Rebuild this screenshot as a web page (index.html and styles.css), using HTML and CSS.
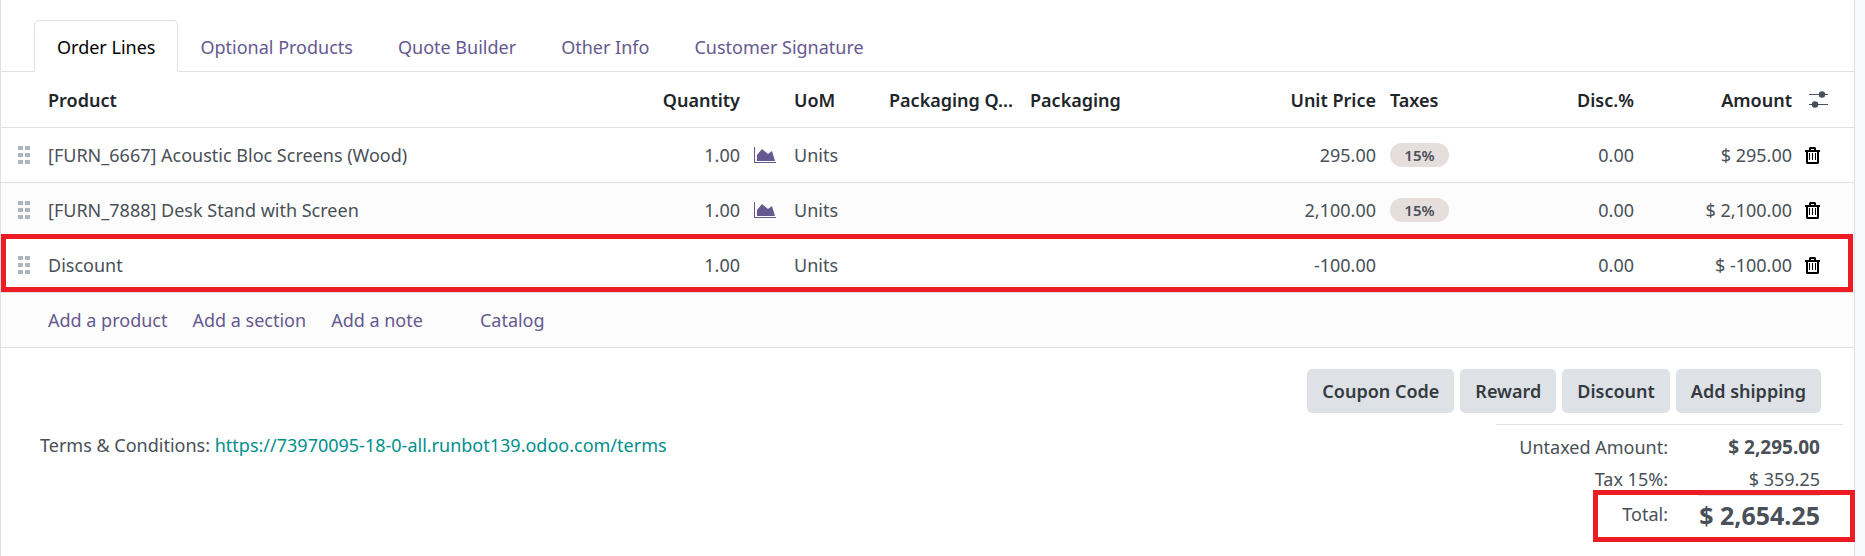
FILE: index.html
```html
<!DOCTYPE html>
<html lang="en">
<head>
    <meta charset="UTF-8">
    <meta name="viewport" content="width=device-width, initial-scale=1.0">
    <title>Order Lines</title>
    <link rel="stylesheet" href="styles.css">
</head>
<body>
    <!-- Shared icons -->
    <svg class="sprite" aria-hidden="true">
        <symbol id="icon-handle" viewBox="0 0 12 18">
            <path d="M0 0h5v4H0zM7 0h5v4H7zM0 7h5v4H0zM7 7h5v4H7zM0 14h5v4H0zM7 14h5v4H7z"/>
        </symbol>
        <symbol id="icon-chart" viewBox="0 0 22 17">
            <path d="M0 0h1v15h21v1H0z"/>
            <path d="M3 14V8l5-6 6 5 4-3 3 10z"/>
        </symbol>
        <symbol id="icon-trash" viewBox="0 0 15 17">
            <path d="M0 3h15v2H0zM4 3V1l1-1h5l1 1v2H9V2H6v1z"/>
            <path d="M1 4h2v11h9V4h2v12l-1 1H2l-1-1z"/>
            <path d="M4 6h1v7H4zM7 6h1v7H7zM10 6h1v7h-1z"/>
        </symbol>
        <symbol id="icon-sliders" viewBox="0 0 19 17">
            <path d="M0 3h19v1H0zM0 13h19v1H0z"/>
            <circle cx="13" cy="3.5" r="3.2"/>
            <circle cx="6" cy="13.5" r="3.2"/>
        </symbol>
    </svg>

    <main class="sheet">
        <nav class="tabs">
            <a href="#" class="tab active">Order Lines</a>
            <a href="#" class="tab">Optional Products</a>
            <a href="#" class="tab">Quote Builder</a>
            <a href="#" class="tab">Other Info</a>
            <a href="#" class="tab">Customer Signature</a>
        </nav>

        <table class="lines">
            <colgroup>
                <col class="col-handle">
                <col>
                <col class="col-quantity">
                <col class="col-chart">
                <col class="col-uom">
                <col class="col-pack-qty">
                <col class="col-packaging">
                <col class="col-price">
                <col class="col-taxes">
                <col class="col-disc">
                <col class="col-amount">
                <col class="col-actions">
            </colgroup>
            <thead>
                <tr>
                    <th></th>
                    <th>Product</th>
                    <th class="number">Quantity</th>
                    <th></th>
                    <th>UoM</th>
                    <th>Packaging Q...</th>
                    <th>Packaging</th>
                    <th class="number">Unit Price</th>
                    <th>Taxes</th>
                    <th class="number">Disc.%</th>
                    <th class="number">Amount</th>
                    <th class="actions"><button type="button" class="icon-btn options" aria-label="Optional columns"><svg width="19" height="17"><use href="#icon-sliders"/></svg></button></th>
                </tr>
            </thead>
            <tbody>
                <tr>
                    <td class="handle"><svg width="12" height="18"><use href="#icon-handle"/></svg></td>
                    <td>[FURN_6667] Acoustic Bloc Screens (Wood)</td>
                    <td class="number">1.00</td>
                    <td class="chart"><button type="button" class="icon-btn" aria-label="Forecast"><svg width="22" height="17"><use href="#icon-chart"/></svg></button></td>
                    <td>Units</td>
                    <td></td>
                    <td></td>
                    <td class="number">295.00</td>
                    <td><span class="badge">15%</span></td>
                    <td class="number">0.00</td>
                    <td class="number">$ 295.00</td>
                    <td class="actions"><button type="button" class="icon-btn" aria-label="Delete"><svg width="15" height="17"><use href="#icon-trash"/></svg></button></td>
                </tr>
                <tr class="striped">
                    <td class="handle"><svg width="12" height="18"><use href="#icon-handle"/></svg></td>
                    <td>[FURN_7888] Desk Stand with Screen</td>
                    <td class="number">1.00</td>
                    <td class="chart"><button type="button" class="icon-btn" aria-label="Forecast"><svg width="22" height="17"><use href="#icon-chart"/></svg></button></td>
                    <td>Units</td>
                    <td></td>
                    <td></td>
                    <td class="number">2,100.00</td>
                    <td><span class="badge">15%</span></td>
                    <td class="number">0.00</td>
                    <td class="number">$ 2,100.00</td>
                    <td class="actions"><button type="button" class="icon-btn" aria-label="Delete"><svg width="15" height="17"><use href="#icon-trash"/></svg></button></td>
                </tr>
                <tr class="marked">
                    <td class="handle"><svg width="12" height="18"><use href="#icon-handle"/></svg></td>
                    <td>Discount</td>
                    <td class="number">1.00</td>
                    <td></td>
                    <td>Units</td>
                    <td></td>
                    <td></td>
                    <td class="number">-100.00</td>
                    <td></td>
                    <td class="number">0.00</td>
                    <td class="number">$ -100.00</td>
                    <td class="actions"><button type="button" class="icon-btn" aria-label="Delete"><svg width="15" height="17"><use href="#icon-trash"/></svg></button></td>
                </tr>
                <tr class="striped">
                    <td></td>
                    <td colspan="11">
                        <div class="add-links">
                            <a href="#">Add a product</a>
                            <a href="#">Add a section</a>
                            <a href="#">Add a note</a>
                            <a href="#" class="catalog">Catalog</a>
                        </div>
                    </td>
                </tr>
            </tbody>
        </table>

        <div class="buttons">
            <button type="button" class="btn">Coupon Code</button>
            <button type="button" class="btn">Reward</button>
            <button type="button" class="btn">Discount</button>
            <button type="button" class="btn">Add shipping</button>
        </div>

        <div class="footer">
            <p class="terms">Terms &amp; Conditions: <a href="#">https://73970095-18-0-all.runbot139.odoo.com/terms</a></p>
            <dl class="totals">
                <div class="total-row">
                    <dt>Untaxed Amount:</dt>
                    <dd class="bold">$ 2,295.00</dd>
                </div>
                <div class="total-row">
                    <dt>Tax 15%:</dt>
                    <dd>$ 359.25</dd>
                </div>
                <div class="total-row grand-total">
                    <dt>Total:</dt>
                    <dd>$ 2,654.25</dd>
                </div>
            </dl>
        </div>
    </main>
</body>
</html>
```
FILE: styles.css
```css
*,
*::after {
    box-sizing: border-box;
}

body {
    margin: 0;
    background-color: #f8f9fa;
    font-family: "Noto Sans", "Open Sans", sans-serif;
    font-size: 18px;
    line-height: 28px;
    color: #495057;
}

a {
    color: #66598f;
    text-decoration: none;
}

button {
    font-family: inherit;
    font-size: inherit;
    line-height: inherit;
    border: none;
    cursor: pointer;
}

.sprite {
    position: absolute;
    width: 0;
    height: 0;
}

.sheet {
    min-height: 100vh;
    margin-right: 10px;
    padding-top: 20px;
    background-color: white;
    border-left: 1px solid #dee2e6;
    border-right: 1px solid #dee2e6;
}

/* Tabs */
.tabs {
    display: flex;
    padding-left: 33px;
    border-bottom: 1px solid #dee2e6;
}

.tab {
    margin: 0 -1px -1px 0;
    padding: 12px 22px 10px;
    border: 1px solid transparent;
    border-radius: 5px 5px 0 0;
    white-space: nowrap;
}

.tab.active {
    color: black;
    background-color: white;
    border-color: #dee2e6 #dee2e6 white;
}

/* Order lines */
.lines {
    width: 100%;
    table-layout: fixed;
    border-collapse: separate;
    border-spacing: 0;
}

.col-handle,
.col-chart {
    width: 40px;
}

.col-quantity {
    width: 147px;
}

.col-uom {
    width: 95px;
}

.col-pack-qty {
    width: 141px;
}

.col-packaging,
.col-price {
    width: 180px;
}

.col-taxes {
    width: 140px;
}

.col-disc {
    width: 118px;
}

.col-amount {
    width: 158px;
}

.col-actions {
    width: 55px;
}

.lines th,
.lines td {
    height: 55px;
    padding: 0 7px;
    border-bottom: 1px solid #dee2e6;
    text-align: left;
    white-space: nowrap;
}

.lines th {
    height: 56px;
    font-weight: 600;
    color: #212529;
}

.lines .number {
    text-align: right;
}

.lines .handle {
    padding-left: 17px;
}

.lines .actions {
    padding-left: 6px;
}

.striped {
    background-color: #fcfcfc;
}

.lines svg {
    display: block;
    fill: currentColor;
}

.lines .handle svg {
    color: #adb5bd;
}

.icon-btn {
    display: block;
    padding: 0;
    background: none;
    color: black;
}

.chart .icon-btn {
    color: #66598f;
}

.options {
    margin-left: 4px;
    color: #495057;
}

.badge {
    display: block;
    width: 59px;
    border-radius: 12px;
    background-color: #e6dedd;
    font-size: 15px;
    line-height: 24px;
    font-weight: 600;
    text-align: center;
}

.marked {
    position: relative;
}

.marked .actions::after {
    content: "";
    position: absolute;
    inset: -4px 1px 1px 0;
    border: 5px solid #ed1c24;
    pointer-events: none;
}

.add-links {
    display: flex;
    gap: 25px;
}

.catalog {
    margin-left: 32px;
}

/* Buttons and totals */
.buttons {
    display: flex;
    justify-content: flex-end;
    gap: 6px;
    padding: 21px 33px 11px;
}

.btn {
    padding: 8px 15px;
    border-radius: 5px;
    background-color: #dee2e6;
    font-weight: 600;
    color: #343a40;
}

.footer {
    display: flex;
    justify-content: space-between;
    padding: 0 11px 0 39px;
}

.terms {
    margin: 7px 0 0;
}

.terms a {
    color: #008f8c;
}

.totals {
    width: 347px;
    margin: 0;
    padding: 6px 23px 0 0;
    border-top: 1px solid #dee2e6;
}

.total-row {
    display: grid;
    grid-template-columns: 1fr 122px;
    gap: 30px;
    line-height: 32px;
    text-align: right;
}

.total-row dd {
    margin: 0;
    white-space: nowrap;
}

.total-row .bold {
    font-size: 19px;
    font-weight: 700;
}

.grand-total {
    position: relative;
    line-height: 38px;
}

.total-row.grand-total dd {
    border-top: 1px solid #dee2e6;
    font-size: 25px;
    font-weight: 700;
}

.grand-total::after {
    content: "";
    position: absolute;
    top: -5px;
    right: -35px;
    width: 262px;
    height: 52px;
    border: 5px solid #ed1c24;
    pointer-events: none;
}
```
